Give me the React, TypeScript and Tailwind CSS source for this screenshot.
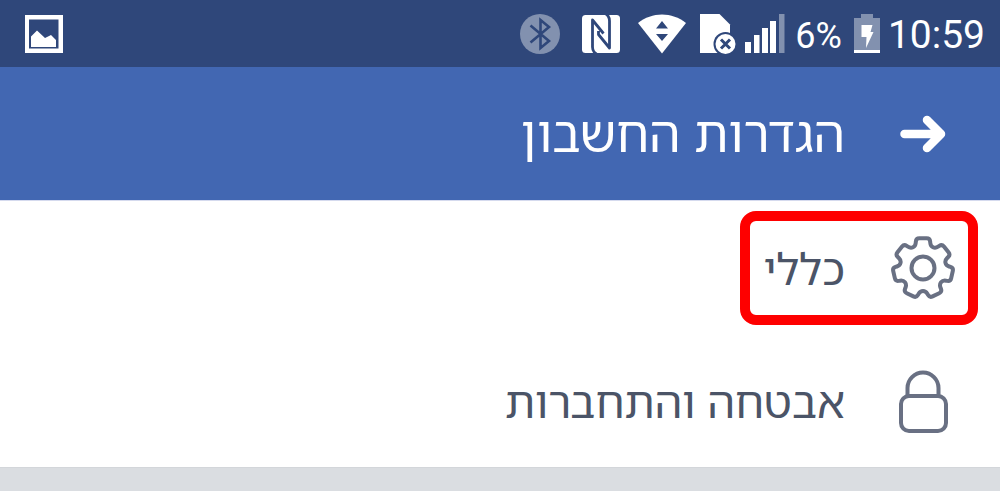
import React from "react";

interface SettingsItemProps {
  name: string;
  href: string;
  icon: React.ReactNode;
  highlighted?: boolean;
}

type Point = [number, number];

const GEAR_TEETH = 7;
const GEAR_ROUNDING = 3.2;

// Closed outline of the gear, centred on 0,0, with every corner rounded off.
const gearPath = () => {
  const points: Array<Point> = [];
  for (let i = 0; i < GEAR_TEETH; i++) {
    const corners = [
      [-19, 23.2],
      [-13, 30.5],
      [13, 30.5],
      [19, 23.2],
    ];
    corners.forEach(([offset, radius]) => {
      const angle = (((i * 360) / GEAR_TEETH + offset) * Math.PI) / 180;
      points.push([Math.sin(angle) * radius, -Math.cos(angle) * radius]);
    });
  }
  const toward = (from: Point, to: Point) => {
    const share = Math.min(0.5, GEAR_ROUNDING / Math.hypot(to[0] - from[0], to[1] - from[1]));
    return `${(from[0] + (to[0] - from[0]) * share).toFixed(2)} ${(from[1] + (to[1] - from[1]) * share).toFixed(2)}`;
  };

  return (
    points
      .map((point, i) => {
        const previous = points[(i + points.length - 1) % points.length];
        const next = points[(i + 1) % points.length];
        return `${i === 0 ? "M" : "L"}${toward(point, previous)} Q${point[0].toFixed(2)} ${point[1].toFixed(2)} ${toward(point, next)}`;
      })
      .join(" ") + "Z"
  );
};

const GearIcon = () => (
  <svg viewBox="-32 -32 64 64" className="size-16" fill="none" stroke="#697083" strokeWidth="4" aria-hidden="true">
    <path d={gearPath()} strokeLinejoin="round" />
    <circle r="11.5" />
  </svg>
);

const LockIcon = () => (
  <svg viewBox="0 0 64 64" className="size-16" fill="none" stroke="#697083" strokeWidth="4" aria-hidden="true">
    <path d="M16.5 27V19a15.5 15.5 0 0 1 31 0v8" />
    <rect x="10" y="27" width="45" height="35" rx="8" />
  </svg>
);

const settings: Array<SettingsItemProps> = [
  {
    name: "כללי",
    href: "#general",
    icon: <GearIcon />,
    highlighted: true,
  },
  {
    name: "אבטחה והתחברות",
    href: "#security",
    icon: <LockIcon />,
  },
];

const App = () => {
  return (
    <div dir="rtl" className="bg-white font-['Noto_Sans_Hebrew','Open_Sans','Noto_Sans',sans-serif]">
      <StatusBar />
      <Header />
      <main>
        <nav>
          {settings.map((item) => (
            <SettingsItem {...item} key={item.href} />
          ))}
        </nav>
        <div className="h-6 border-t border-[#d3d6da] bg-[#dadde1]" />
      </main>
    </div>
  );
};

export default App;

const StatusBar = () => (
  <div
    dir="ltr"
    className="flex h-[67px] items-center justify-between bg-[#2f477a] pr-[15px] pl-[25px] font-[Roboto,sans-serif] text-white"
  >
    <svg viewBox="0 0 38 38" className="size-[38px]" aria-hidden="true">
      <path fill="currentColor" fillRule="evenodd" d="M0 0h38v38H0zM4 4.5v29h29.500v-29z" />
      <path fill="currentColor" d="M6 32V21.500L12 15.500l8 7.500 6-3 5 5v7z" />
    </svg>
    <div className="flex items-center">
      <svg viewBox="0 0 40 40" className="size-10" aria-hidden="true">
        <circle cx="20" cy="20" r="20" fill="#8291af" />
        <path d="M10.500 11.500L29 27 20.500 34V6L29 13 10.500 28.500" fill="none" stroke="#2f477a" strokeWidth="2.600" />
      </svg>
      <svg viewBox="0 0 38 38" className="ml-[22px] size-[38px]" aria-hidden="true">
        <rect width="38" height="38" rx="3.500" fill="currentColor" />
        <path
          d="M14.500 39C11 37 10.500 35 10.500 32V5L21.500 18.500 M24 -1C27 1 27.500 3 27.500 6V33L16.500 19.500V16"
          fill="none"
          stroke="#2f477a"
          strokeWidth="2.800"
          strokeLinejoin="round"
        />
      </svg>
      <svg viewBox="0 0 48 40" className="ml-[18px] h-10 w-12" aria-hidden="true">
        <path d="M0 9C14-2.500 34-2.500 48 9L24 39.500z" fill="currentColor" />
        <path d="M18 14.500L24 7l6 7.500z M18 20h12L24 27z" fill="#2f477a" />
      </svg>
      <svg viewBox="0 0 36 40" className="ml-3.5 h-10 w-9" aria-hidden="true">
        <path d="M0 0h19.500L30 10.500V39H0z" fill="currentColor" />
        <circle cx="25.500" cy="30" r="12" fill="#2f477a" />
        <circle cx="25.500" cy="30" r="10" fill="currentColor" />
        <path d="M21 25.500l9 9m0-9l-9 9" stroke="#2f477a" strokeWidth="3" />
      </svg>
      <svg viewBox="0 0 40 40" className="ml-[9px] size-10" aria-hidden="true">
        <path d="M0 28h6v11H0z M9 21h5.500v18H9z M17 14h6v25H17z M25 7h6v32h-6z" fill="currentColor" />
        <path d="M34 0h5.500v39H34z" fill="#8291af" />
      </svg>
      <span className="ml-2.5 pt-1 text-4xl">6%</span>
      <svg viewBox="0 0 26 39" className="ml-3 h-[39px] w-[26px]" aria-hidden="true">
        <path d="M7 0h12v4h7v35H0V4h7z" fill="#8291af" />
        <path d="M0 36h26v3H0z M7.500 11h11l-2 7h3L12 34l.5-11h-5z" fill="currentColor" />
      </svg>
      <time className="ml-2 pt-1 text-[39px]">10:59</time>
    </div>
  </div>
);

const Header = () => (
  <header className="flex h-[134px] items-center gap-[46px] border-b border-[#d5daee] bg-[#4267b2] px-[45px] text-white">
    <button type="button" aria-label="חזרה" className="flex w-16 justify-center">
      <svg viewBox="0 0 46 38" className="h-[38px] w-[46px]" aria-hidden="true">
        <path
          d="M4.500 19H39M27 5l14 14-14 14"
          fill="none"
          stroke="currentColor"
          strokeWidth="8.500"
          strokeLinecap="round"
          strokeLinejoin="round"
        />
      </svg>
    </button>
    <h1 className="text-[50px]">הגדרות החשבון</h1>
  </header>
);

const SettingsItem = (props: SettingsItemProps) => {
  const { name, href, icon, highlighted } = props;

  return (
    <a href={href} className="flex h-[133px] items-center px-[45px] text-[#4b5467]">
      <span className="relative flex items-center gap-[46px]">
        {icon}
        <span className="text-[44px] leading-16">{name}</span>
        {highlighted && (
          <span className="absolute -inset-x-[23px] -inset-y-[25px] rounded-2xl border-10 border-[#fe0000]" />
        )}
      </span>
    </a>
  );
};
